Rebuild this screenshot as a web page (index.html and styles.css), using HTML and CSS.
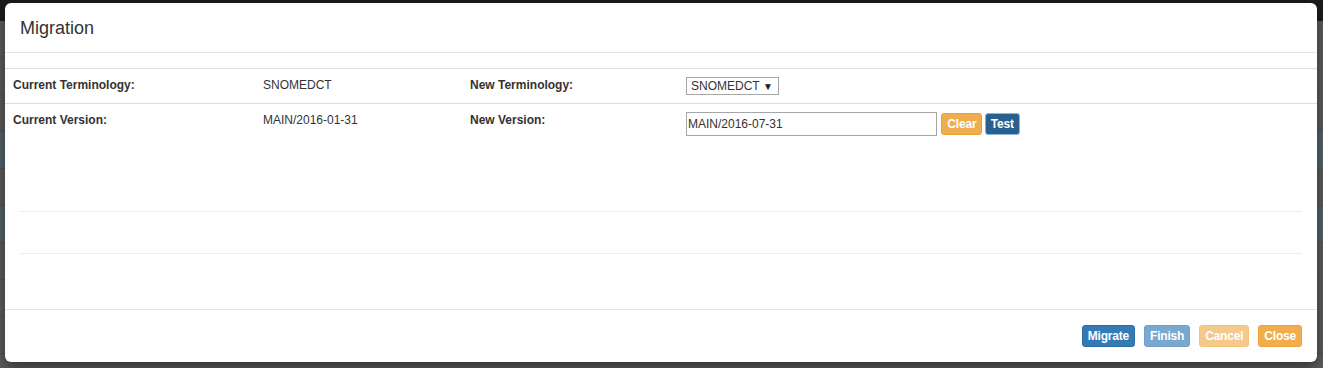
FILE: index.html
```html
<!DOCTYPE html>
<html lang="en">
<head>
    <meta charset="UTF-8">
    <title>Migration</title>
    <link rel="stylesheet" href="styles.css">
</head>
<body>

<div class="page">
    <div class="navbar"></div>
    <div class="page-row"></div>
    <div class="page-row"></div>
    <div class="page-row"></div>
    <div class="page-row tinted"></div>
    <div class="page-row"></div>
    <div class="page-row tinted"></div>
    <div class="page-row"></div>
    <div class="page-row"></div>
    <div class="page-row"></div>
</div>

<div class="modal">
    <div class="modal-header">
        <h4 class="modal-title">Migration</h4>
    </div>

    <div class="modal-body">
        <table class="migrate-table">
            <tr>
                <td class="col-a"><strong>Current Terminology:</strong></td>
                <td class="col-b">SNOMEDCT</td>
                <td class="col-c"><strong>New Terminology:</strong></td>
                <td>
                    <span class="select-wrap">
                        <select class="term-select">
                            <option>SNOMEDCT</option>
                        </select>
                    </span>
                </td>
            </tr>
            <tr>
                <td><strong>Current Version:</strong></td>
                <td>MAIN/2016-01-31</td>
                <td><strong>New Version:</strong></td>
                <td>
                    <input type="text" class="version-input" value="MAIN/2016-07-31">
                    <button class="btn btn-warning">Clear</button>
                    <button class="btn btn-primary btn-focus">Test</button>
                </td>
            </tr>
        </table>

        <div class="test-result"></div>
        <hr>
        <hr>
    </div>

    <div class="modal-footer">
        <button class="btn btn-primary">Migrate</button>
        <button class="btn btn-primary" disabled>Finish</button>
        <button class="btn btn-warning" disabled>Cancel</button>
        <button class="btn btn-warning">Close</button>
    </div>
</div>

</body>
</html>
```

FILE: styles.css
```css
body {
    margin: 0;
    background: #5e5e5e;
    font-family: "Liberation Sans", Arial, sans-serif;
    font-size: 12px;
    line-height: 17px;
    color: #333;
    height: 368px;
    overflow: hidden;
}
.page {
    height: 368px;
}
.navbar {
    height: 21px;
    background: #1c1c1c;
}
.page-row {
    height: 36px;
    border-bottom: 1px solid #545454;
}
.page-row.tinted {
    background: #56656e;
}

.modal {
    position: absolute;
    left: 5px;
    top: 3px;
    width: 1312px;
    background: #fff;
    border-radius: 6px;
    box-shadow: 0 5px 15px rgba(0, 0, 0, 0.5);
}
.modal-header {
    padding: 13px 15px 12px;
    border-bottom: 1px solid #e5e5e5;
}
.modal-title {
    margin: 0;
    font-size: 18px;
    font-weight: normal;
    line-height: 24px;
    color: #333;
}
.modal-body {
    padding: 15px 15px 14px;
}
.migrate-table {
    width: 1312px;
    margin: 0 -15px;
    border-collapse: collapse;
}
.migrate-table td {
    padding: 8px;
    border-top: 1px solid #ddd;
    vertical-align: top;
    white-space: nowrap;
}
.col-a {
    width: 234px;
}
.col-b {
    width: 191px;
}
.col-c {
    width: 200px;
}
.select-wrap {
    position: relative;
    display: inline-block;
}
.select-wrap::after {
    content: "\25BC";
    position: absolute;
    right: 6px;
    top: 1px;
    font-size: 10px;
    color: #222;
    pointer-events: none;
}
.term-select {
    -webkit-appearance: none;
    appearance: none;
    width: 93px;
    height: 18px;
    margin: 0;
    padding: 0 0 0 4px;
    border: 1px solid #a6a6a6;
    border-radius: 0;
    background: #fff;
    font-family: "Liberation Sans", Arial, sans-serif;
    font-size: 12px;
    color: #333;
}
.version-input {
    width: 251px;
    height: 24px;
    box-sizing: border-box;
    margin: 0;
    padding: 1px 1px;
    border: 1px solid #a6a6a6;
    font-family: "Liberation Sans", Arial, sans-serif;
    font-size: 12px;
    color: #333;
    vertical-align: top;
}
.btn {
    display: inline-block;
    padding: 1px 5px;
    font-family: "Liberation Sans", Arial, sans-serif;
    font-size: 12px;
    font-weight: bold;
    letter-spacing: -0.2px;
    line-height: 18px;
    border: 1px solid transparent;
    border-radius: 3px;
    color: #fff;
    cursor: pointer;
    vertical-align: top;
}
.version-input + .btn {
    margin-top: 1px;
    margin-left: 1px;
}
.btn-primary {
    background: #337ab7;
    border-color: #2e6da4;
}
.btn-warning {
    background: #f0ad4e;
    border-color: #eea236;
}
.btn-focus {
    margin-left: -1px;
    margin-top: 1px;
    background: #286090;
    border-color: #8fb3d9;
}
.btn[disabled] {
    opacity: 0.65;
    cursor: not-allowed;
}
.test-result {
    height: 67px;
}
hr {
    margin: 0 0 41px;
    border: 0;
    border-top: 1px solid #eee;
}
.modal-footer {
    display: flex;
    justify-content: flex-end;
    gap: 9px;
    padding: 15px;
    border-top: 1px solid #e5e5e5;
}
```
